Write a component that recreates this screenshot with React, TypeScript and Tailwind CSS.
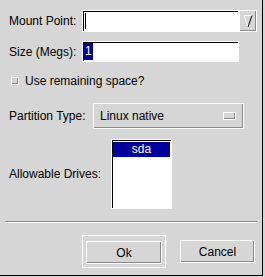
import React from "react";

const sunken =
  "border-t border-l border-[#7c7c7c] border-b border-r border-white shadow-[inset_1px_1px_0_#000]";
const raised =
  "border-t border-l border-white border-b border-r border-black shadow-[inset_-1px_-1px_0_#8a8a8a]";

export default function App() {
  return (
    <div className="w-[265px] h-[277px] bg-[#d6d6d6] font-['Liberation_Sans',Arial,sans-serif] text-[12px] leading-[14px] text-black">
      <div className="w-[263px] h-[276px] border-r border-b border-black flex flex-col">
        {/* mount point */}
        <div className="flex items-center mt-[10px] h-[22px]">
          <div className="w-[82px] pl-[9px]">Mount Point:</div>
          <div className={`w-[157px] h-[22px] bg-white ${sunken} flex items-center pl-[2px]`}>
            <div className="w-px h-[16px] bg-black" />
          </div>
          <div className={`w-[18px] h-[22px] ${raised} flex items-center justify-center`}>
            <svg width="10" height="14" viewBox="0 0 10 14">
              <path d="M1 1.5 H9" stroke="#fff" strokeWidth="1" />
              <path d="M1 1.5 L5 13" stroke="#fff" strokeWidth="1" />
              <path d="M9 1.5 L5 13" stroke="#000" strokeWidth="1" />
            </svg>
          </div>
        </div>

        {/* size */}
        <div className="flex items-center mt-[9px] h-[21px]">
          <div className="w-[82px] pl-[9px]">Size (Megs):</div>
          <div className={`w-[157px] h-[21px] bg-white ${sunken} flex items-center pl-[1px]`}>
            <span className="bg-[#00009c] text-white px-[1px] h-[17px] leading-[17px]">1</span>
          </div>
        </div>

        {/* checkbox */}
        <div className="flex items-center mt-[12px] h-[14px] pl-[11px]">
          <div className="w-[8px] h-[8px] bg-[#d6d6d6] border-t border-l border-white border-b border-r border-black shadow-[inset_-1px_-1px_0_#8a8a8a]" />
          <span className="ml-[6px]">Use remaining space?</span>
        </div>

        {/* partition type */}
        <div className="flex items-center mt-[15px] h-[25px]">
          <div className="w-[93px] pl-[9px]">Partition Type:</div>
          <div className={`w-[151px] h-[26px] ${raised} flex items-center justify-between pl-[6px] pr-[7px]`}>
            <span>Linux native</span>
            <div className="w-[13px] h-[8px] border-t border-l border-white border-b border-r border-black shadow-[inset_-1px_-1px_0_#8a8a8a]" />
          </div>
        </div>

        {/* drives */}
        <div className="flex items-center mt-[11px]">
          <div className="w-[111px] pl-[9px]">Allowable Drives:</div>
          <div className={`w-[61px] h-[70px] bg-white ${sunken} p-[1px]`}>
            <div className="h-[15px] bg-[#00009c] text-white text-center leading-[15px] mt-px">sda</div>
          </div>
        </div>

        {/* separator */}
        <div className="mt-[12px] mx-[5px] border-t border-[#8a8a8a] border-b border-b-white" />

        {/* buttons */}
        <div className="flex items-center mt-[12px] pl-[82px]">
          <div className="w-[84px] h-[33px] border-t border-l border-black border-b border-r border-white flex items-center justify-center pt-[2px]">
            <button className={`w-[76px] h-[23px] bg-[#d6d6d6] ${raised}`}>Ok</button>
          </div>
          <button className={`ml-[14px] w-[75px] h-[23px] bg-[#d6d6d6] ${raised}`}>Cancel</button>
        </div>
      </div>
    </div>
  );
}
